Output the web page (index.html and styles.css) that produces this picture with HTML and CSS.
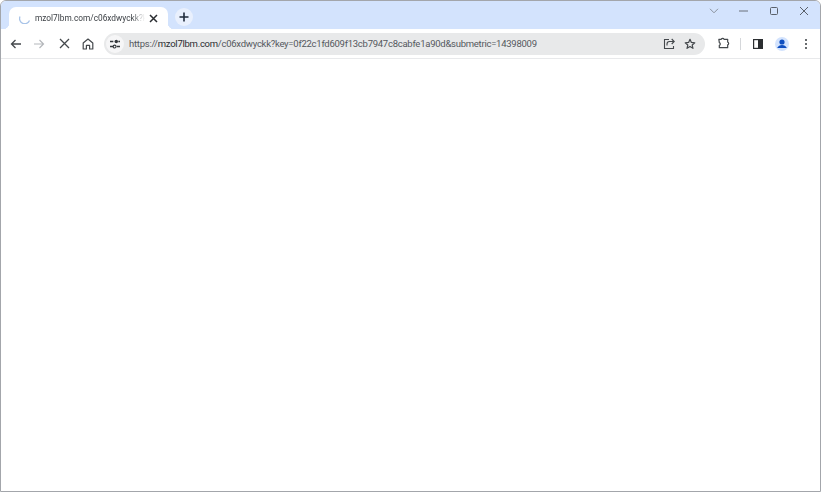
FILE: index.html
```html
<!DOCTYPE html>
<html lang="en">
<head>
<meta charset="utf-8">
<title>mzol7lbm.com</title>
<link rel="stylesheet" href="styles.css">
</head>
<body>
<div class="window">
  <header class="tabstrip">
    <div class="tab">
      <svg class="spinner" width="12" height="12" viewBox="0 0 12 12"><path d="M1 4.5A5 5 0 0 0 10.5 8.6" fill="none" stroke="#a9c4e8" stroke-width="1.3"/></svg>
      <span class="tab-title">mzol7lbm.com/c06xdwyckk?ke</span>
      <svg class="tab-close" width="9" height="9" viewBox="0 0 9 9"><path d="M1 1l7 7M8 1L1 8" stroke="#2a2d31" stroke-width="1.5"/></svg>
    </div>
    <div class="newtab">
      <svg width="10" height="10" viewBox="0 0 10 10"><path d="M5 .5v9M.5 5h9" stroke="#1f2a3a" stroke-width="1.6"/></svg>
    </div>
    <div class="controls">
      <div class="ctl"><svg width="10" height="6" viewBox="0 0 10 6"><path d="M1 .8l4 4 4-4" fill="none" stroke="#8a919c" stroke-width="1"/></svg></div>
      <div class="ctl"><svg width="10" height="2" viewBox="0 0 10 2"><path d="M0 1h9" stroke="#6a717b" stroke-width="1"/></svg></div>
      <div class="ctl"><svg width="10" height="10" viewBox="0 0 10 10"><rect x="1.5" y="1.5" width="7" height="7" rx="1" fill="none" stroke="#5a616b" stroke-width="1"/></svg></div>
      <div class="ctl"><svg width="10" height="10" viewBox="0 0 10 10"><path d="M1 1l8 8M9 1l-8 8" stroke="#5a616b" stroke-width="1"/></svg></div>
    </div>
  </header>
  <nav class="toolbar">
    <div class="btn"><svg width="12" height="12" viewBox="0 0 12 12"><path d="M11 6H1.5M5.5 2L1.5 6l4 4" fill="none" stroke="#44484c" stroke-width="1.3"/></svg></div>
    <div class="btn btn-fwd"><svg width="12" height="12" viewBox="0 0 12 12"><path d="M1 6h9.5M6.5 2l4 4-4 4" fill="none" stroke="#b4b7bb" stroke-width="1.2"/></svg></div>
    <div class="btn"><svg width="11" height="11" viewBox="0 0 11 11"><path d="M1 1l9 9M10 1l-9 9" stroke="#44484c" stroke-width="1.3"/></svg></div>
    <div class="btn"><svg width="12" height="12" viewBox="0 0 12 12"><path d="M1.2 5L6 1l4.8 4v6H7.6V7.4H4.4V11H1.2z" fill="none" stroke="#44484c" stroke-width="1.2" stroke-linejoin="round"/></svg></div>
    <div class="omnibox">
      <div class="site-info"><svg width="10" height="10" viewBox="0 0 12 12"><path d="M0 3h4M0 9h4M10 3h2M8 9h4" stroke="#33373b" stroke-width="1.6"/><circle cx="7.5" cy="3" r="2.1" fill="#33373b"/><circle cx="5.5" cy="9" r="1.7" fill="none" stroke="#33373b" stroke-width="1.3"/></svg></div>
      <div class="url"><span class="url-dim">https://</span><span class="url-host">mzol7lbm.com</span><span class="url-dim">/c06xdwyckk?key=0f22c1fd609f13cb7947c8cabfe1a90d&amp;submetric=14398009</span></div>
      <div class="omni-btn"><svg width="12" height="12" viewBox="0 0 12 12"><path d="M6 1.5H1.5v9h9V8" fill="none" stroke="#44484c" stroke-width="1.1"/><path d="M4 7.5V6a2.5 2.5 0 0 1 2.5-2.5H11M8.7 1L11.2 3.5 8.7 6" fill="none" stroke="#44484c" stroke-width="1.1"/></svg></div>
      <div class="omni-btn"><svg width="12" height="12" viewBox="0 0 13 13"><path d="M6.5 1.4l1.5 3.4 3.7.4-2.8 2.4.8 3.6-3.2-1.9-3.2 1.9.8-3.6L1.3 5.2 5 4.8z" fill="none" stroke="#44484c" stroke-width="1.3" stroke-linejoin="round"/></svg></div>
    </div>
    <div class="btn btn-ext"><svg width="13" height="13" viewBox="0 0 14 14"><path d="M2 3.5h2.6a1.6 1.6 0 0 1 3 0h3.9v3a1.6 1.6 0 0 1 0 3v3H2.5V10a1.6 1.6 0 0 0 0-3z" transform="translate(0 -1)" fill="none" stroke="#44484c" stroke-width="1.3" stroke-linejoin="round"/></svg></div>
    <div class="divider"></div>
    <div class="btn"><svg width="10" height="10" viewBox="0 0 10 10"><rect x=".6" y=".6" width="8.8" height="8.8" fill="none" stroke="#2b2e31" stroke-width="1.2"/><rect x="5" y="1" width="4.5" height="8" fill="#2b2e31"/></svg></div>
    <div class="btn"><svg width="14" height="14" viewBox="0 0 14 14"><circle cx="7" cy="7" r="7" fill="#d3e3fd"/><circle cx="7" cy="5" r="2.6" fill="#0f4fc0"/><path d="M2.2 11c.8-2.1 2.8-3 4.8-3s4 .9 4.8 3z" fill="#0f4fc0"/></svg></div>
    <div class="btn"><svg width="4" height="12" viewBox="0 0 4 12"><circle cx="2" cy="2" r="1.1" fill="#44484c"/><circle cx="2" cy="6" r="1.1" fill="#44484c"/><circle cx="2" cy="10" r="1.1" fill="#44484c"/></svg></div>
  </nav>
  <main class="content"></main>
</div>
</body>
</html>
```

FILE: styles.css
```css
* { box-sizing: border-box; }
html, body { margin: 0; height: 100%; background: #fff; overflow: hidden; }
body { font-family: Roboto, "Noto Sans", sans-serif; }
.window {
  height: 492px;
  display: flex;
  flex-direction: column;
  border: 1px solid #a3a6ab;
  border-radius: 6px 6px 0 0;
  overflow: hidden;
}
.tabstrip {
  height: 28px;
  flex: none;
  display: flex;
  align-items: flex-end;
  background: #d3e3fd;
  padding-left: 8px;
}
.tab {
  width: 159px;
  height: 22px;
  background: #fff;
  border-radius: 7px 7px 0 0;
  display: flex;
  align-items: center;
  padding-left: 10px;
  gap: 4px;
  position: relative;
}
.tab::after {
  content: "";
  position: absolute;
  right: -6px;
  bottom: 0;
  width: 6px;
  height: 6px;
  background: radial-gradient(circle at 100% 0, transparent 6px, #fff 6.5px);
}
.tab::before {
  content: "";
  position: absolute;
  left: -6px;
  bottom: 0;
  width: 6px;
  height: 6px;
  background: radial-gradient(circle at 0 0, transparent 6px, #fff 6.5px);
}
.spinner { flex: none; }
.tab-title {
  width: 110px;
  flex: none;
  white-space: nowrap;
  font-size: 8.3px;
  color: #3c4045;
  -webkit-mask-image: linear-gradient(90deg, #000 88%, transparent);
  mask-image: linear-gradient(90deg, #000 88%, transparent);
}
.tab-close { flex: none; }
.newtab {
  width: 18px;
  height: 18px;
  border-radius: 50%;
  background: #e9f0fd;
  margin: 0 0 3px 7px;
  display: flex;
  align-items: center;
  justify-content: center;
}
.controls {
  margin-left: auto;
  align-self: flex-start;
  display: flex;
  padding-right: 1px;
}
.ctl {
  width: 30px;
  height: 20px;
  display: flex;
  align-items: center;
  justify-content: center;
}
.toolbar {
  height: 30px;
  flex: none;
  display: flex;
  align-items: center;
  padding-left: 3px;
  background: #fff;
  border-bottom: 1px solid #e8e9eb;
}
.btn {
  width: 24px;
  height: 24px;
  flex: none;
  display: flex;
  align-items: center;
  justify-content: center;
}
.btn-fwd { padding-right: 2px; }
.omnibox {
  width: 601px;
  height: 22px;
  margin-left: 4px;
  flex: none;
  display: flex;
  align-items: center;
  background: #e8e9ea;
  border-radius: 11px;
}
.site-info {
  width: 18px;
  height: 18px;
  margin-left: 2px;
  border-radius: 50%;
  background: #f6f6f7;
  display: flex;
  align-items: center;
  justify-content: center;
  flex: none;
}
.url {
  margin-left: 5px;
  flex: 1;
  font-size: 9.5px;
  letter-spacing: -0.26px;
  white-space: nowrap;
  color: #54585d;
}
.url-host { color: #2a2c30; }
.omni-btn {
  width: 21px;
  height: 20px;
  flex: none;
  display: flex;
  align-items: center;
  justify-content: center;
}
.omni-btn:last-child { margin-right: 5px; }
.btn-ext { margin-left: 6px; }
.divider {
  width: 1px;
  height: 12px;
  background: #d5d7da;
  margin: 0 5px;
  flex: none;
}
.content { flex: 1; background: #fff; }
```
